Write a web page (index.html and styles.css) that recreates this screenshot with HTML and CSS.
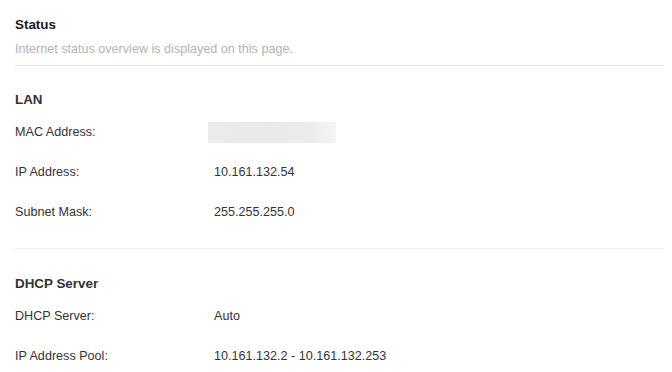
FILE: index.html
```html
<!DOCTYPE html>
<html>
<head>
<meta charset="utf-8">
<link rel="stylesheet" href="styles.css">
</head>
<body>
<div class="page">
  <div class="header">
    <div class="title">Status</div>
    <div class="subtitle">Internet status overview is displayed on this page.</div>
  </div>
  <div class="section lan">
    <div class="section-title">LAN</div>
    <div class="rows">
      <div class="row"><div class="label">MAC Address:</div><div class="value"><div class="blur"></div></div></div>
      <div class="row"><div class="label">IP Address:</div><div class="value">10.161.132.54</div></div>
      <div class="row"><div class="label">Subnet Mask:</div><div class="value">255.255.255.0</div></div>
    </div>
  </div>
  <div class="section dhcp">
    <div class="section-title">DHCP Server</div>
    <div class="rows">
      <div class="row"><div class="label">DHCP Server:</div><div class="value">Auto</div></div>
      <div class="row"><div class="label">IP Address Pool:</div><div class="value">10.161.132.2 - 10.161.132.253</div></div>
    </div>
  </div>
</div>
</body>
</html>
```
FILE: styles.css
```css
html, body {
  margin: 0;
  padding: 0;
  background: #ffffff;
}
body {
  font-family: "Liberation Sans", Arial, sans-serif;
  color: #333333;
  font-size: 12.6px;
}
.page {
  padding: 0 8px 0 15px;
}
.header {
  padding-top: 17px;
  padding-bottom: 8px;
  border-bottom: 1px solid #e6e6e6;
}
.title {
  font-size: 13.4px;
  font-weight: bold;
  color: #1a1a1a;
  line-height: 16px;
}
.subtitle {
  margin-top: 8px;
  font-size: 12.6px;
  color: #b4b4b4;
  line-height: 16px;
}
.section-title {
  font-size: 13.4px;
  font-weight: bold;
  color: #333333;
  line-height: 16px;
}
.lan {
  padding-top: 26px;
  padding-bottom: 16px;
  border-bottom: 1px solid #ececec;
}
.dhcp {
  padding-top: 27px;
}
.rows {
  margin-top: 4px;
}
.row {
  display: grid;
  grid-template-columns: 199px 1fr;
  height: 40px;
  align-items: center;
}
.blur {
  width: 128px;
  height: 21px;
  margin-left: -6px;
  background: linear-gradient(90deg, #ebebeb 0%, #e9e9eb 50%, #ececec 80%, #f5f5f5 100%);
}
```
